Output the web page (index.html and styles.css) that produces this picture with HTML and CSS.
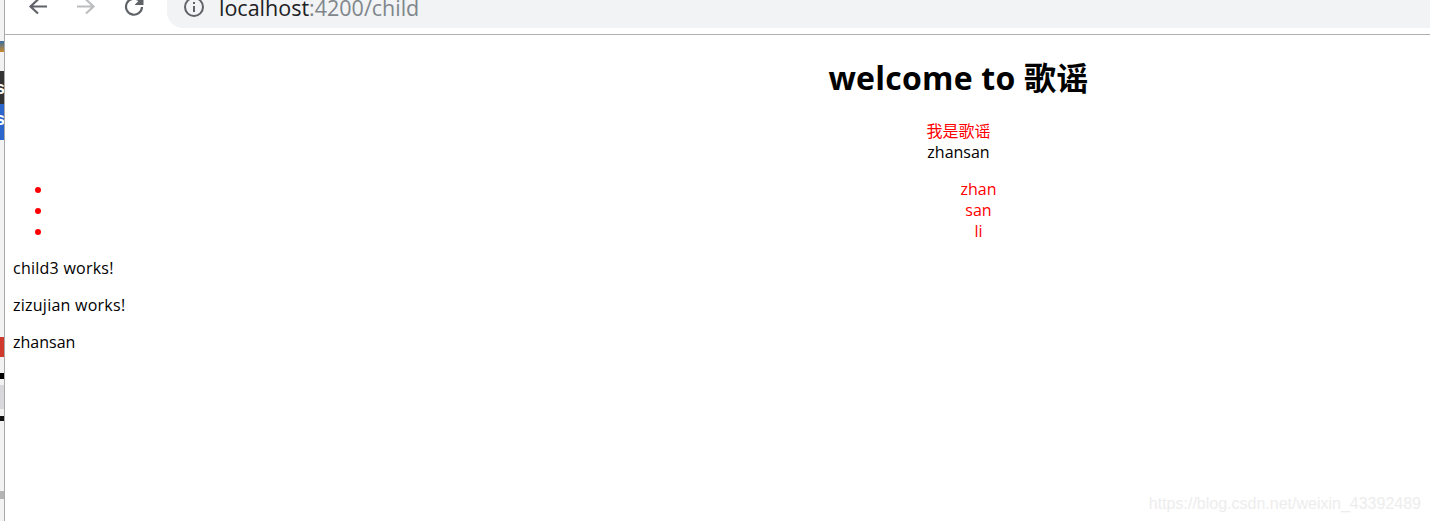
FILE: index.html
```html
<!DOCTYPE html>
<html lang="en">
<head>
  <meta charset="UTF-8" />
  <meta name="viewport" content="width=device-width, initial-scale=1" />
  <title>child</title>
  <link rel="stylesheet" href="styles.css">
</head>
<body>

  <div class="screen">
    <!-- sliver of the window behind the browser -->
    <div class="behind">
      <div class="behind-top"></div>
      <div class="behind-speck"></div>
      <div class="behind-gap-a"></div>
      <div class="behind-dark">s</div>
      <div class="behind-blue">s</div>
      <div class="behind-gap-b"></div>
      <div class="behind-red"></div>
      <div class="behind-gap-c"></div>
      <div class="behind-black"></div>
      <div class="behind-gap-d"></div>
      <div class="behind-gray"></div>
      <div class="behind-gap-e"></div>
      <div class="behind-black-thin"></div>
      <div class="behind-gap-f"></div>
      <div class="behind-speck-gray"></div>
    </div>

    <div class="browser">
      <div class="toolbar">
        <div class="nav-icons">
          <svg class="nav-icon" viewBox="0 0 24 24"><path d="M21 9.5H5M12 2.5l-7.5 7 7.5 7" /></svg>
          <svg class="nav-icon nav-icon-off" viewBox="0 0 24 24"><path d="M3 9.5h16M12 2.5l7.5 7-7.5 7" /></svg>
          <svg class="nav-icon" viewBox="0 0 24 24"><path d="M20 10a8 8 0 1 1-2.6-6.2L20 6.5" /><path class="fill" d="M21.5 -1v9h-9z" /></svg>
        </div>
        <div class="address">
          <svg class="info-icon" viewBox="0 0 22 22">
            <circle cx="11" cy="11" r="9" />
            <path d="M11 10v6M11 6v2" />
          </svg>
          <span class="host">localhost</span><span class="path">:4200/child</span>
        </div>
      </div>

      <div class="viewport">
        <div class="page">
          <h1>welcome to 歌谣</h1>
          <div class="intro">
            <div class="red">我是歌谣</div>
            <div>zhansan</div>
          </div>
          <ul class="names">
            <li>zhan</li>
            <li>san</li>
            <li>li</li>
          </ul>
          <p class="wide">child3 works!</p>
          <p class="wide">zizujian works!</p>
          <p>zhansan</p>
        </div>
        <div class="watermark">https://blog.csdn.net/weixin_43392489</div>
      </div>
    </div>
  </div>

</body>
</html>
```

FILE: styles.css
```css
html, body {
  margin: 0;
  height: 100%;
  overflow: hidden;
  background-color: #fff;
}

body {
  color: #000;
  font-family: "Open Sans", "Noto Sans CJK SC", sans-serif;
  font-size: 16px;
  line-height: 21px;
}

.screen {
  display: flex;
  width: 1430px;
  height: 521px;
  overflow: hidden;
}

/* left sliver */
.behind {
  flex: 0 0 4px;
  border-right: 1px solid #a9a9a9;
  background-color: #f2f2f2;
  display: flex;
  flex-direction: column;
  overflow: hidden;
}

.behind-top { height: 41px; }
.behind-speck { height: 11px; background: linear-gradient(#3a6ea5, #c98a2b); }
.behind-gap-a { height: 19px; }

.behind-dark,
.behind-blue {
  font: bold 18px/1 "Liberation Sans", sans-serif;
  color: #fff;
  overflow: hidden;
  text-indent: -5px;
}

.behind-dark { height: 33px; background-color: #333; line-height: 34px; }
.behind-blue { height: 36px; background-color: #2a66cc; line-height: 30px; }
.behind-gap-b { height: 197px; }
.behind-red { height: 20px; background-color: #cf3a2c; }
.behind-gap-c { height: 16px; }
.behind-black { height: 6px; background-color: #000; }
.behind-gap-d { height: 6px; }
.behind-gray { height: 24px; background-color: #d8d8dc; }
.behind-gap-e { height: 7px; }
.behind-black-thin { height: 5px; background-color: #111; }
.behind-gap-f { height: 70px; }
.behind-speck-gray { height: 8px; background-color: #b4b4b4; }

.browser {
  flex: 1;
  min-width: 0;
  display: flex;
  flex-direction: column;
}

/* toolbar, cut off at the top */
.toolbar {
  flex: 0 0 34px;
  display: flex;
  align-items: flex-start;
  border-bottom: 1px solid #b0b0b0;
  overflow: hidden;
}

.nav-icons {
  display: flex;
  gap: 24px;
  margin: -3px 0 0 21px;
}

.nav-icon {
  width: 24px;
  height: 24px;
  overflow: visible;
  fill: none;
  stroke: #5f6368;
  stroke-width: 2.2;
}

.nav-icon-off { stroke: #bcbdbf; }

.nav-icon .fill {
  fill: #5f6368;
  stroke: none;
}

.address {
  flex: 1;
  height: 28px;
  margin-left: 21px;
  padding-left: 16px;
  display: flex;
  align-items: flex-start;
  background-color: #f1f3f4;
  border-bottom-left-radius: 16px;
  font-size: 21.5px;
  line-height: 16px;
}

.info-icon {
  width: 22px;
  height: 22px;
  margin: -4px 14px 0 0;
  fill: none;
  stroke: #5f6368;
  stroke-width: 2;
}

.host { color: #202124; }
.path { color: #80868b; }

/* page was laid out for a wider window than this crop */
.viewport {
  flex: 1;
  position: relative;
  overflow: hidden;
}

.page {
  width: 1891px;
  padding: 0 8px;
  margin-top: 22px;
}

h1 {
  margin: 0 0 22px;
  font-size: 32px;
  line-height: 42px;
  font-weight: bold;
  letter-spacing: 0.25px;
  text-align: center;
}

.intro {
  text-align: center;
}

.red { color: #f00; }

.names {
  margin: 16px 0;
  padding-left: 40px;
  color: #f00;
  text-align: center;
}

p {
  margin: 16px 0;
}

.wide {
  letter-spacing: 0.25px;
}

.watermark {
  position: absolute;
  right: 9px;
  bottom: 7px;
  color: #ededed;
  font-family: "Liberation Sans", sans-serif;
  font-size: 16px;
  line-height: 20px;
}
```
